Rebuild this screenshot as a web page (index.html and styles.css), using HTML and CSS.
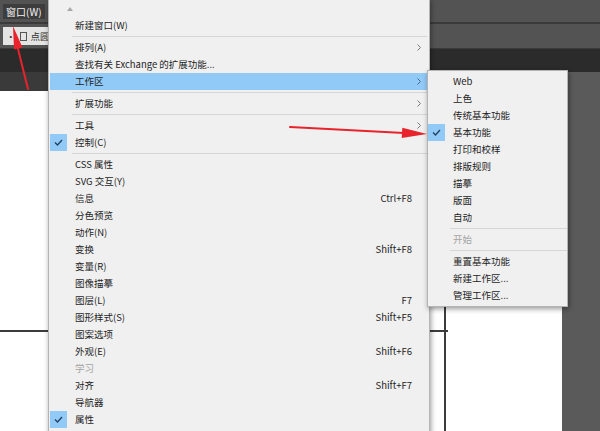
FILE: index.html
```html
<!DOCTYPE html>
<html lang="zh-CN">
<head>
  <meta charset="UTF-8" />
  <title>窗口菜单 – 工作区</title>
  <link rel="stylesheet" href="styles.css">
</head>
<body>
  <div class="app">
    <div class="menubar">
      <span class="menu-title">窗口(W)</span>
    </div>
    <div class="controlbar">
      <div class="ctrl-field">
        <span class="dot">•</span>
        <span class="ctrl-icon"></span>
        <span>点圆</span>
      </div>
    </div>
    <div class="tabbar"></div>
    <div class="workspace">
      <div class="document">
        <div class="doc-top"></div>
        <div class="artboard">
          <svg width="562" height="340" viewBox="0 0 562 340">
            <line x1="0" y1="240" x2="448" y2="240" stroke="#3c3c3c" stroke-width="2"/>
            <line x1="445" y1="0" x2="445" y2="340" stroke="#3c3c3c" stroke-width="2"/>
          </svg>
        </div>
      </div>
      <div class="pasteboard"></div>
    </div>
  </div>

  <!-- Fenster-Menü -->
  <div class="menu main-menu">
    <div class="scroll-up">
      <svg width="6" height="4" viewBox="0 0 6 4"><polygon points="0,4 3,0 6,4" fill="#a8a8a8"/></svg>
    </div>
    <div class="item"><span class="gutter"></span><span class="label">新建窗口(W)</span></div>
    <div class="sep"></div>
    <div class="item"><span class="gutter"></span><span class="label">排列(A)</span><span class="key"></span><span class="sub"><svg width="4" height="7" viewBox="0 0 4 7"><polyline points="0.5,0.5 3.5,3.5 0.5,6.5" fill="none" stroke="#7a7a7a"/></svg></span></div>
    <div class="item"><span class="gutter"></span><span class="label">查找有关 Exchange 的扩展功能...</span></div>
    <div class="item active"><span class="gutter"></span><span class="label">工作区</span><span class="key"></span><span class="sub"><svg width="4" height="7" viewBox="0 0 4 7"><polyline points="0.5,0.5 3.5,3.5 0.5,6.5" fill="none" stroke="#4a6a8a"/></svg></span></div>
    <div class="sep"></div>
    <div class="item"><span class="gutter"></span><span class="label">扩展功能</span><span class="key"></span><span class="sub"><svg width="4" height="7" viewBox="0 0 4 7"><polyline points="0.5,0.5 3.5,3.5 0.5,6.5" fill="none" stroke="#7a7a7a"/></svg></span></div>
    <div class="sep"></div>
    <div class="item"><span class="gutter"></span><span class="label">工具</span><span class="key"></span><span class="sub"><svg width="4" height="7" viewBox="0 0 4 7"><polyline points="0.5,0.5 3.5,3.5 0.5,6.5" fill="none" stroke="#7a7a7a"/></svg></span></div>
    <div class="item"><span class="gutter"><span class="check"><svg width="17" height="17" viewBox="0 0 17 17"><polyline points="5,8.5 7.5,11 12,6" fill="none" stroke="#23405e" stroke-width="1.3"/></svg></span></span><span class="label">控制(C)</span></div>
    <div class="sep"></div>
    <div class="item"><span class="gutter"></span><span class="label">CSS 属性</span></div>
    <div class="item"><span class="gutter"></span><span class="label">SVG 交互(Y)</span></div>
    <div class="item"><span class="gutter"></span><span class="label">信息</span><span class="key">Ctrl+F8</span></div>
    <div class="item"><span class="gutter"></span><span class="label">分色预览</span></div>
    <div class="item"><span class="gutter"></span><span class="label">动作(N)</span></div>
    <div class="item"><span class="gutter"></span><span class="label">变换</span><span class="key">Shift+F8</span></div>
    <div class="item"><span class="gutter"></span><span class="label">变量(R)</span></div>
    <div class="item"><span class="gutter"></span><span class="label">图像描摹</span></div>
    <div class="item"><span class="gutter"></span><span class="label">图层(L)</span><span class="key">F7</span></div>
    <div class="item"><span class="gutter"></span><span class="label">图形样式(S)</span><span class="key">Shift+F5</span></div>
    <div class="item"><span class="gutter"></span><span class="label">图案选项</span></div>
    <div class="item"><span class="gutter"></span><span class="label">外观(E)</span><span class="key">Shift+F6</span></div>
    <div class="item disabled"><span class="gutter"></span><span class="label">学习</span></div>
    <div class="item"><span class="gutter"></span><span class="label">对齐</span><span class="key">Shift+F7</span></div>
    <div class="item"><span class="gutter"></span><span class="label">导航器</span></div>
    <div class="item"><span class="gutter"><span class="check"><svg width="17" height="17" viewBox="0 0 17 17"><polyline points="5,8.5 7.5,11 12,6" fill="none" stroke="#23405e" stroke-width="1.3"/></svg></span></span><span class="label">属性</span></div>
  </div>

  <!-- Untermenü Arbeitsbereich -->
  <div class="menu sub-menu">
    <div class="item"><span class="gutter"></span><span class="label">Web</span></div>
    <div class="item"><span class="gutter"></span><span class="label">上色</span></div>
    <div class="item"><span class="gutter"></span><span class="label">传统基本功能</span></div>
    <div class="item"><span class="gutter"><span class="check"><svg width="17" height="17" viewBox="0 0 17 17"><polyline points="5,8.5 7.5,11 12,6" fill="none" stroke="#23405e" stroke-width="1.3"/></svg></span></span><span class="label">基本功能</span></div>
    <div class="item"><span class="gutter"></span><span class="label">打印和校样</span></div>
    <div class="item"><span class="gutter"></span><span class="label">排版规则</span></div>
    <div class="item"><span class="gutter"></span><span class="label">描摹</span></div>
    <div class="item"><span class="gutter"></span><span class="label">版面</span></div>
    <div class="item"><span class="gutter"></span><span class="label">自动</span></div>
    <div class="sep"></div>
    <div class="item disabled"><span class="gutter"></span><span class="label">开始</span></div>
    <div class="sep"></div>
    <div class="item"><span class="gutter"></span><span class="label">重置基本功能</span></div>
    <div class="item"><span class="gutter"></span><span class="label">新建工作区...</span></div>
    <div class="item"><span class="gutter"></span><span class="label">管理工作区...</span></div>
  </div>

  <!-- Markierungspfeile -->
  <svg class="annotations" width="600" height="431" viewBox="0 0 600 431">
    <line x1="28" y1="89" x2="17" y2="45" stroke="#e8232b" stroke-width="2" stroke-linecap="round"/>
    <polygon points="13,26 22.5,47.5 14,49.5" fill="#e8232b"/>
    <line x1="290" y1="127" x2="404" y2="133" stroke="#e8232b" stroke-width="2" stroke-linecap="round"/>
    <polygon points="427,134 401.7,138 402.3,127.7" fill="#e8232b"/>
  </svg>
</body>
</html>
```

FILE: styles.css
```css
:root {
  --ui-gray: #535353;
  --ui-dark: #2b2b2b;
  --menu-bg: #f0f0f0;
  --menu-border: #b4b4b4;
  --highlight: #91c9f7;
  --text: #1e1e1e;
  --disabled: #a3a3a3;
}

body {
  margin: 0;
  width: 600px;
  height: 431px;
  overflow: hidden;
  position: relative;
  background-color: var(--ui-gray);
  font-family: "Noto Sans CJK SC", "Noto Sans", sans-serif;
}

.menubar {
  height: 22px;
  background-color: var(--ui-gray);
  border-bottom: 2px solid #3a3a3a;
  display: flex;
  align-items: center;
  padding-left: 3px;
}

.menu-title {
  height: 15px;
  line-height: 15px;
  padding: 0 3px;
  background-color: #3d3d3d;
  color: #f2f2f2;
  font-size: 10px;
}

.controlbar {
  height: 24px;
  background-color: var(--ui-gray);
  border-bottom: 1px solid #3a3a3a;
  display: flex;
  align-items: center;
  padding-left: 3px;
}

.ctrl-field {
  height: 18px;
  width: 60px;
  background-color: #e4e4e4;
  display: flex;
  align-items: center;
  gap: 4px;
  padding-left: 3px;
  font-size: 9.5px;
  color: #333;
}

.ctrl-icon {
  width: 5px;
  height: 7px;
  border: 1px solid #555;
}

.tabbar {
  height: 23px;
  background-color: var(--ui-dark);
}

.workspace {
  display: flex;
  height: 359px;
}

.document {
  width: 562px;
  display: flex;
  flex-direction: column;
}

.doc-top {
  height: 19px;
  background-color: #3a3a3a;
}

.artboard {
  flex: 1;
  background-color: white;
}

.artboard svg {
  display: block;
}

.pasteboard {
  flex: 1;
  background-color: #5a5a5a;
}

/* menus */

.menu {
  position: absolute;
  background-color: var(--menu-bg);
  border: 1px solid var(--menu-border);
  box-shadow: 1px 2px 5px rgba(0,0,0,0.4);
  font-size: 9.5px;
  color: var(--text);
}

.main-menu {
  left: 48px;
  top: -1px;
  width: 380px;
  padding-bottom: 20px;
}

.sub-menu {
  left: 427px;
  top: 70px;
  width: 139px;
  padding: 2px 0;
}

.scroll-up {
  height: 17px;
  padding-left: 18px;
  display: flex;
  align-items: center;
}

.scroll-up svg {
  display: block;
}

.item {
  height: 17px;
  display: grid;
  grid-template-columns: 25px 1fr auto 15px;
  align-items: center;
  margin: 0 2px 0 1px;
}

.sub-menu .item {
  grid-template-columns: 25px 1fr;
  margin: 0;
}

.item .label {
  line-height: 17px;
  white-space: nowrap;
}

.item .key {
  line-height: 17px;
  text-align: right;
}

.item .sub {
  display: flex;
  align-items: center;
  padding-left: 5px;
}

.item .sub svg {
  display: block;
}

.item.active {
  background-color: var(--highlight);
}

.item.disabled {
  color: var(--disabled);
}

.gutter {
  height: 17px;
}

.check {
  display: block;
  width: 17px;
  height: 17px;
  background-color: var(--highlight);
}

.check svg {
  display: block;
}

.sep {
  height: 5px;
  display: flex;
  align-items: center;
  padding-left: 23px;
  margin-right: 2px;
}

.sep::after {
  content: "";
  flex: 1;
  height: 1px;
  background-color: #d6d6d6;
}

.sub-menu .sep {
  padding-left: 22px;
  margin-right: 0;
}

.annotations {
  position: absolute;
  left: 0;
  top: 0;
  pointer-events: none;
}
```
